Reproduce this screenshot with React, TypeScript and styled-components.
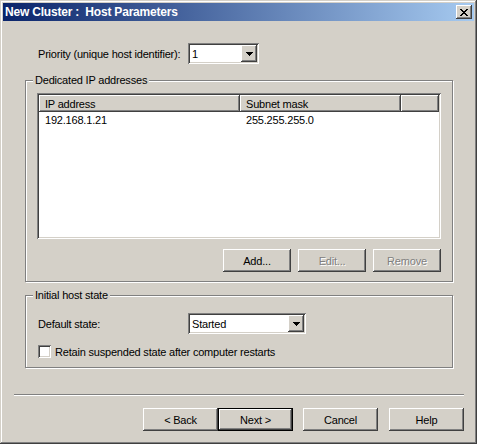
import React from 'react';
import styled, { createGlobalStyle } from 'styled-components';

const GlobalStyle = createGlobalStyle`
  html, body {
    margin: 0;
    padding: 0;
    background: #d4d0c8;
  }
  body {
    font-family: 'Liberation Sans', Arial, sans-serif;
    font-size: 11px;
    letter-spacing: -0.2px;
    color: #000;
  }
`;

const raised = `
  box-shadow: inset -1px -1px 0 #404040, inset 1px 1px 0 #ffffff,
    inset -2px -2px 0 #808080, inset 2px 2px 0 #d4d0c8;
`;

const sunken = `
  box-shadow: inset 1px 1px 0 #808080, inset -1px -1px 0 #ffffff,
    inset 2px 2px 0 #404040, inset -2px -2px 0 #d4d0c8;
`;

const App = () => {
  return (
    <>
      <GlobalStyle />
      <Window>
        <TitleBar>
          <TitleText>New Cluster :  Host Parameters</TitleText>
          <CloseButton>
            <CloseIcon />
          </CloseButton>
        </TitleBar>

        <Body>
          <FieldRow $top={22} $indent={13}>
            <FieldLabel>Priority (unique host identifier):</FieldLabel>
            <Combo $width={71}>
              <ComboValue>1</ComboValue>
              <ComboArrow>
                <ArrowIcon />
              </ComboArrow>
            </Combo>
          </FieldRow>

          <GroupBox $top={16} $height={202}>
            <Legend>Dedicated IP addresses</Legend>
            <ListView>
              <ListHeader>
                <HeaderCell $width={201}>IP address</HeaderCell>
                <HeaderCell $width={161}>Subnet mask</HeaderCell>
                <HeaderCell $width={38} />
              </ListHeader>
              <ListRow>
                <ListCell $width={201}>192.168.1.21</ListCell>
                <ListCell $width={161}>255.255.255.0</ListCell>
              </ListRow>
            </ListView>
            <ListButtons>
              <PushButton $width={68}>Add...</PushButton>
              <PushButton $width={68} disabled>Edit...</PushButton>
              <PushButton $width={68} disabled>Remove</PushButton>
            </ListButtons>
          </GroupBox>

          <GroupBox $top={13} $height={73}>
            <Legend>Initial host state</Legend>
            <FieldRow $top={5} $indent={1}>
              <FieldLabel>Default state:</FieldLabel>
              <Combo $width={118}>
                <ComboValue>Started</ComboValue>
                <ComboArrow>
                  <ArrowIcon />
                </ComboArrow>
              </Combo>
            </FieldRow>
            <CheckRow>
              <CheckBox />
              <span>Retain suspended state after computer restarts</span>
            </CheckRow>
          </GroupBox>

          <Separator />

          <Footer>
            <WizardPair>
              <PushButton $width={75}>&lt; Back</PushButton>
              <PushButton $width={75} $default>Next &gt;</PushButton>
            </WizardPair>
            <PushButton $width={75}>Cancel</PushButton>
            <PushButton $width={75}>Help</PushButton>
          </Footer>
        </Body>
      </Window>
    </>
  );
};

// close glyph
const CloseIcon = () => (
  <svg width="8" height="7" viewBox="0 0 8 7" shapeRendering="crispEdges">
    <path
      d="M0 0h2v1h-2zM6 0h2v1h-2zM1 1h2v1h-2zM5 1h2v1h-2zM2 2h4v1h-4zM3 3h2v1h-2zM2 4h4v1h-4zM1 5h2v1h-2zM5 5h2v1h-2zM0 6h2v1h-2zM6 6h2v1h-2z"
      fill="#000"
    />
  </svg>
);

// combo arrow
const ArrowIcon = () => (
  <svg width="7" height="4" viewBox="0 0 7 4" shapeRendering="crispEdges">
    <path d="M0 0h7v1h-7zM1 1h5v1h-5zM2 2h3v1h-3zM3 3h1v1h-1z" fill="#000" />
  </svg>
);

const Window = styled.div`
  width: 477px;
  height: 444px;
  box-sizing: border-box;
  padding: 3px;
  background: #d4d0c8;
  box-shadow: inset -1px -1px 0 #404040, inset 1px 1px 0 #d4d0c8,
    inset -2px -2px 0 #808080, inset 2px 2px 0 #ffffff;
  display: flex;
  flex-direction: column;
`;

const TitleBar = styled.div`
  height: 18px;
  flex-shrink: 0;
  display: flex;
  align-items: center;
  justify-content: space-between;
  padding: 0 2px 0 2px;
  background: linear-gradient(to right, #0a246a, #a6caf0);
`;

const TitleText = styled.span`
  color: #fff;
  font-weight: bold;
  font-size: 12px;
  white-space: pre;
  letter-spacing: -0.2px;
`;

const CloseButton = styled.div`
  width: 16px;
  height: 14px;
  box-sizing: border-box;
  display: flex;
  align-items: center;
  justify-content: center;
  background: #d4d0c8;
  ${raised}
`;

const Body = styled.div`
  flex: 1;
  display: flex;
  flex-direction: column;
  padding: 0 21px 0 22px;
`;

const FieldRow = styled.div<{ $top: number; $indent: number }>`
  display: flex;
  align-items: center;
  margin-top: ${p => p.$top}px;
  padding-left: ${p => p.$indent}px;
  height: 21px;
`;

const FieldLabel = styled.span`
  width: 150px;
  flex-shrink: 0;
  white-space: nowrap;
`;

const Combo = styled.div<{ $width: number }>`
  width: ${p => p.$width}px;
  height: 21px;
  box-sizing: border-box;
  padding: 2px;
  background: #fff;
  display: flex;
  align-items: center;
  ${sunken}
`;

const ComboValue = styled.span`
  flex: 1;
  padding-left: 2px;
`;

const ComboArrow = styled.div`
  width: 16px;
  height: 17px;
  box-sizing: border-box;
  display: flex;
  align-items: center;
  justify-content: center;
  background: #d4d0c8;
  ${raised}
`;

const GroupBox = styled.div<{ $top: number; $height: number }>`
  position: relative;
  margin-top: ${p => p.$top}px;
  height: ${p => p.$height}px;
  box-sizing: border-box;
  border: 1px solid #808080;
  box-shadow: 1px 1px 0 #ffffff, inset 1px 1px 0 #ffffff;
  padding: 12px 11px 0 11px;
  display: flex;
  flex-direction: column;
`;

const Legend = styled.span`
  position: absolute;
  top: -7px;
  left: 7px;
  padding: 0 2px;
  background: #d4d0c8;
  line-height: 13px;
`;

const ListView = styled.div`
  height: 146px;
  box-sizing: border-box;
  padding: 2px;
  background: #fff;
  ${sunken}
  display: flex;
  flex-direction: column;
`;

const ListHeader = styled.div`
  display: flex;
  height: 17px;
  flex-shrink: 0;
`;

const HeaderCell = styled.div<{ $width: number }>`
  width: ${p => p.$width}px;
  flex-shrink: 0;
  box-sizing: border-box;
  padding-left: 6px;
  display: flex;
  align-items: center;
  background: #d4d0c8;
  ${raised}
  &:last-child {
    flex: 1;
  }
`;

const ListRow = styled.div`
  display: flex;
  height: 16px;
  align-items: center;
`;

const ListCell = styled.div<{ $width: number }>`
  width: ${p => p.$width}px;
  flex-shrink: 0;
  box-sizing: border-box;
  padding-left: 6px;
`;

const ListButtons = styled.div`
  display: flex;
  justify-content: flex-end;
  gap: 7px;
  margin-top: 10px;
`;

const PushButton = styled.button<{ $width: number; $default?: boolean }>`
  width: ${p => p.$width}px;
  height: 23px;
  box-sizing: border-box;
  margin: 0;
  padding: 0;
  font: inherit;
  letter-spacing: inherit;
  color: #000;
  background: #d4d0c8;
  border: ${p => (p.$default ? '1px solid #000' : 'none')};
  ${raised}
  &:disabled {
    color: #808080;
    text-shadow: 1px 1px 0 #ffffff;
  }
`;

const CheckRow = styled.div`
  display: flex;
  align-items: center;
  gap: 4px;
  margin-top: 11px;
  padding-left: 1px;
  white-space: nowrap;
`;

const CheckBox = styled.div`
  width: 13px;
  height: 13px;
  box-sizing: border-box;
  background: #fff;
  ${sunken}
`;

const Separator = styled.div`
  margin: 26px -11px 0 -11px;
  height: 0;
  border-top: 1px solid #808080;
  border-bottom: 1px solid #ffffff;
`;

const Footer = styled.div`
  display: flex;
  justify-content: flex-end;
  gap: 10px;
  margin: 12px -11px 0 0;
  & > :last-child {
    margin-left: 1px;
  }
`;

const WizardPair = styled.div`
  display: flex;
`;

export default App;
